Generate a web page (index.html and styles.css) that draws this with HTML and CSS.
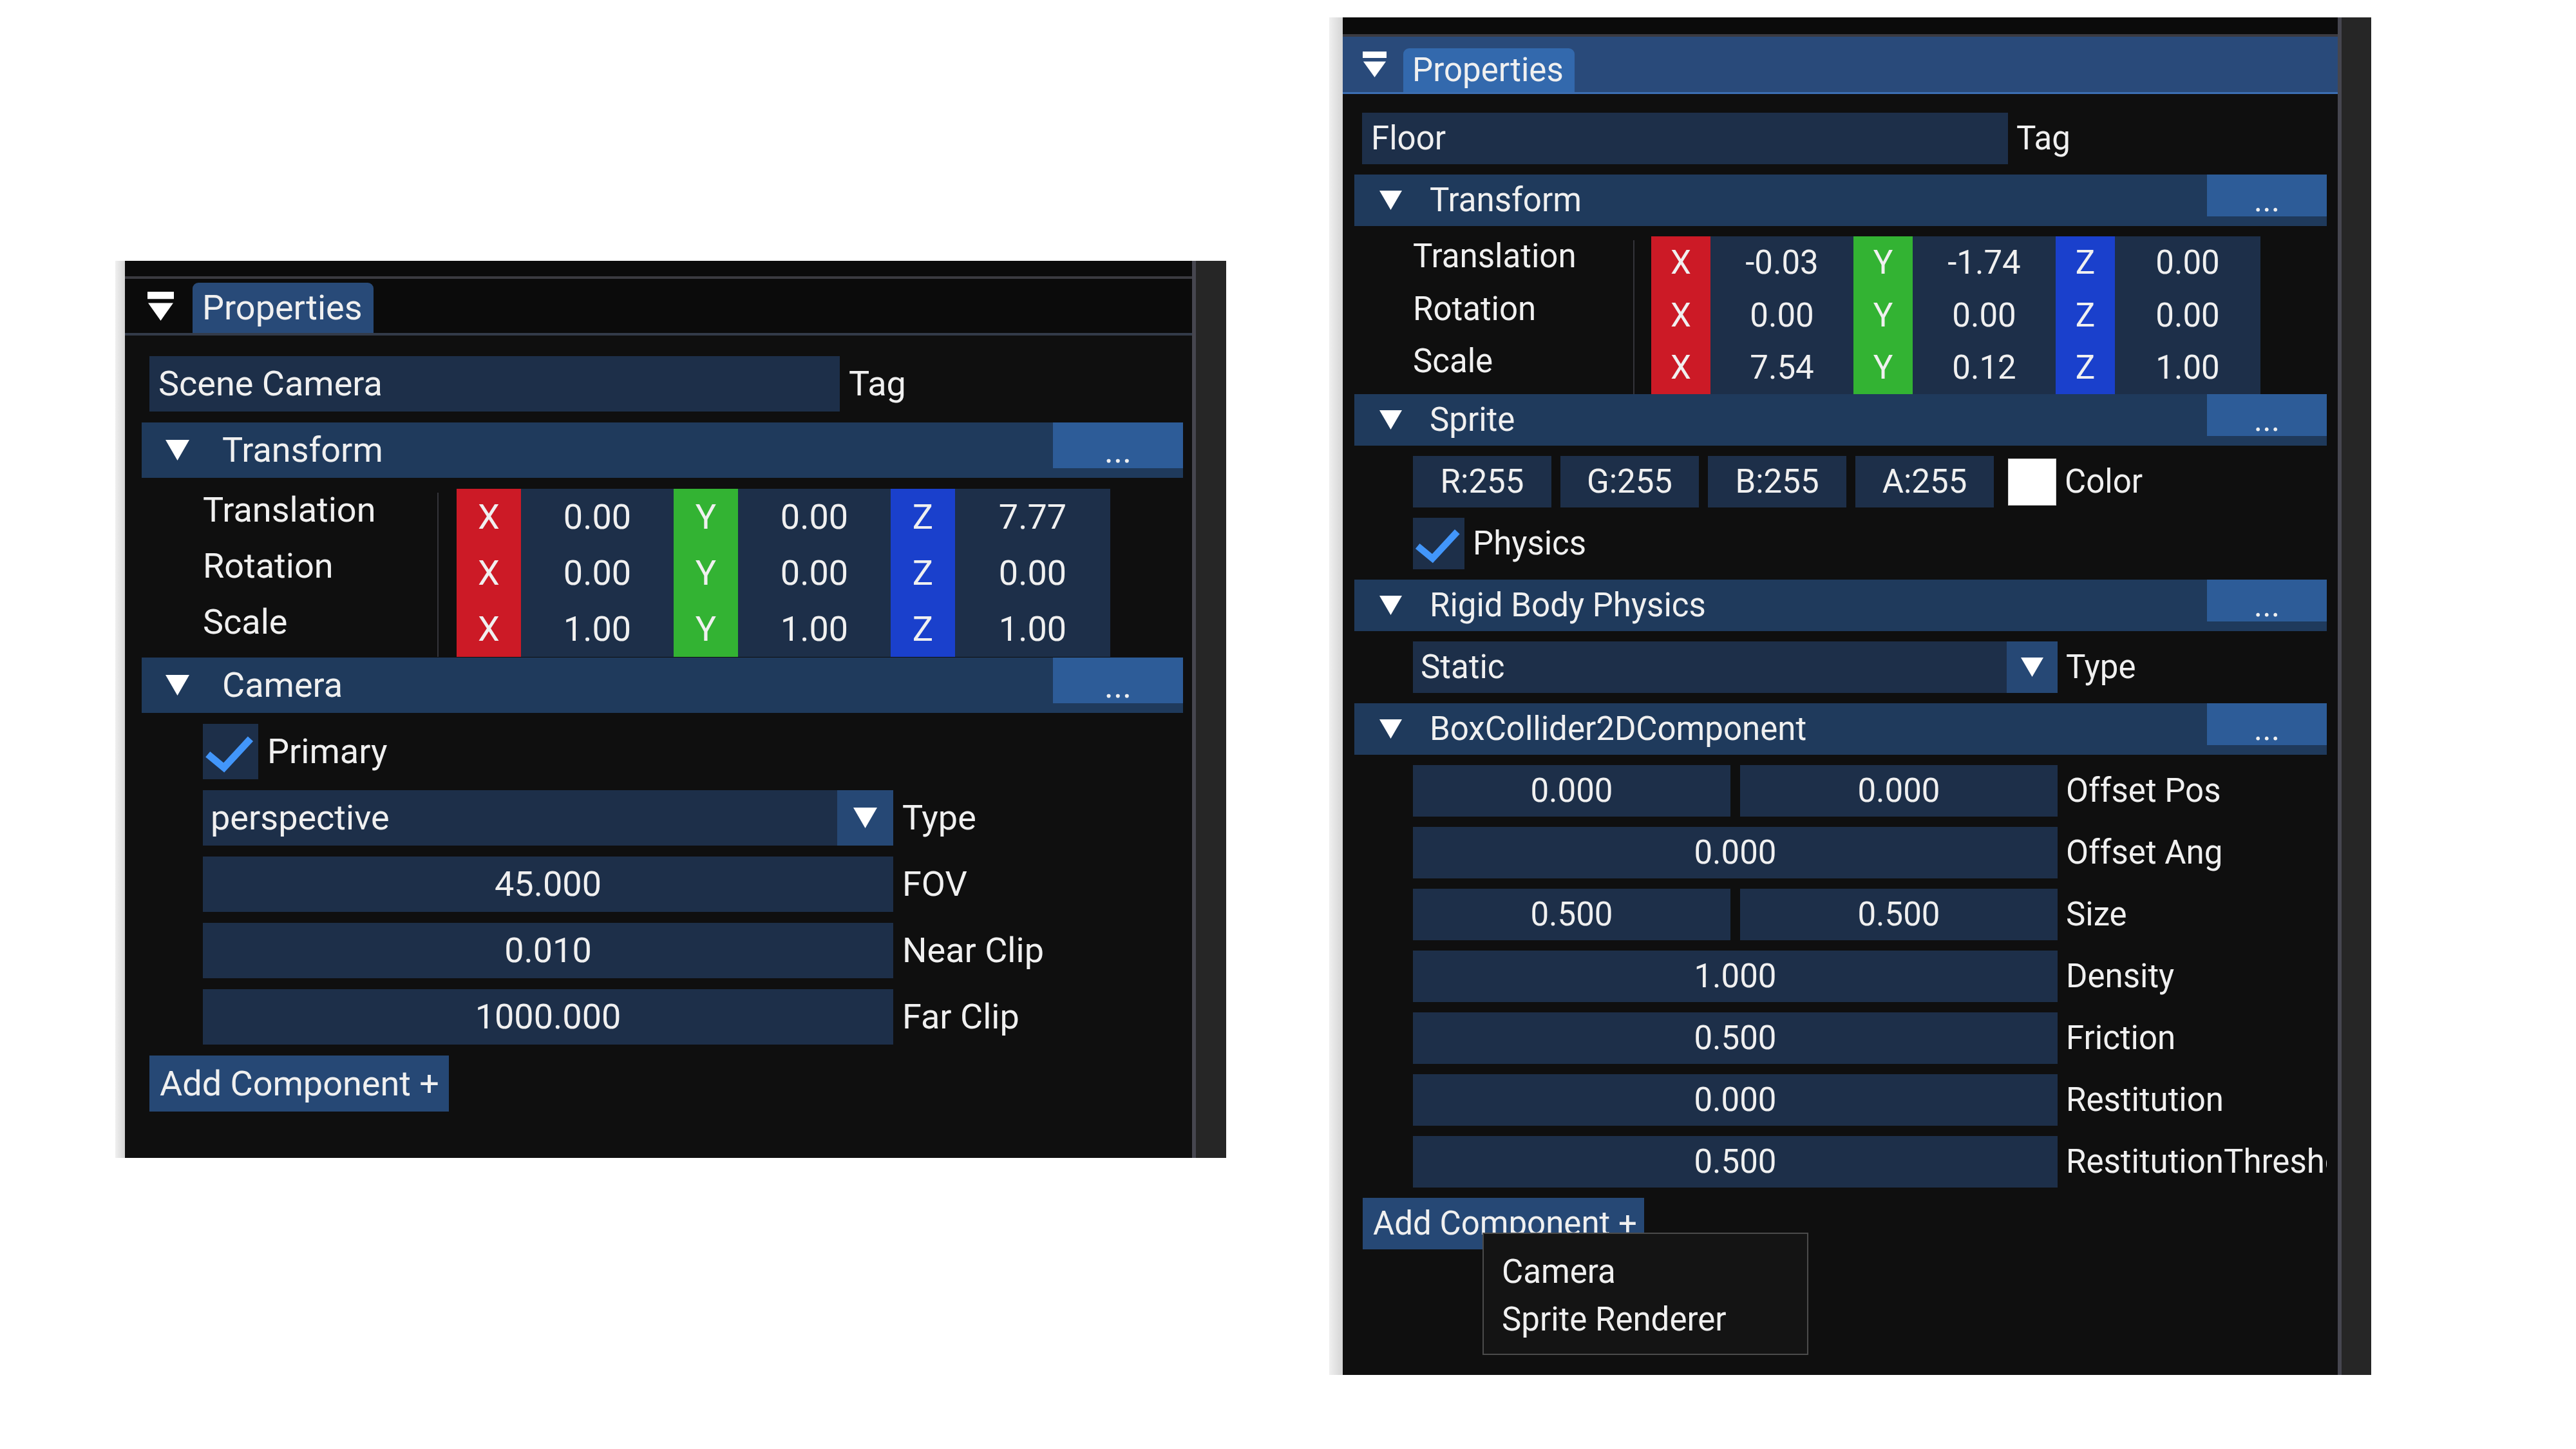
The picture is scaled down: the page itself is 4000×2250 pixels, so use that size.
FILE: index.html
```html
<!DOCTYPE html>
<html lang="en">
<head>
<meta charset="utf-8">
<title>Properties</title>
<link rel="stylesheet" href="styles.css">
</head>
<body>
<main class="canvas">

  <section class="panel panel-left">
    <div class="strip"></div>
    <div class="win">
      <div class="topband"></div>
      <div class="tabbar">
        <svg class="menu-icon" viewBox="0 0 40 44" preserveAspectRatio="none"><rect x="0" y="0" width="40" height="11" fill="#fff"/><polygon points="1,17 39,17 20,44" fill="#fff"/></svg>
        <div class="tab">Properties</div>
      </div>
      <div class="content">
        <div class="prop-row">
          <div class="frame name-input">Scene Camera</div>
          <span class="prop-label">Tag</span>
        </div>

        <div class="header">
          <span class="tri"></span><span class="header-title">Transform</span><span class="header-btn">...</span>
        </div>
        <div class="xform">
          <span class="xsep"></span>
          <span class="xlabel">Translation</span>
          <span class="axis ax-x">X</span><span class="xval xv1">0.00</span>
          <span class="axis ax-y">Y</span><span class="xval xv2">0.00</span>
          <span class="axis ax-z">Z</span><span class="xval xv3">7.77</span>
          <span class="xlabel">Rotation</span>
          <span class="axis ax-x">X</span><span class="xval xv1">0.00</span>
          <span class="axis ax-y">Y</span><span class="xval xv2">0.00</span>
          <span class="axis ax-z">Z</span><span class="xval xv3">0.00</span>
          <span class="xlabel">Scale</span>
          <span class="axis ax-x">X</span><span class="xval xv1">1.00</span>
          <span class="axis ax-y">Y</span><span class="xval xv2">1.00</span>
          <span class="axis ax-z">Z</span><span class="xval xv3">1.00</span>
        </div>

        <div class="header header-tight">
          <span class="tri"></span><span class="header-title">Camera</span><span class="header-btn">...</span>
        </div>
        <div class="prop-row indent">
          <span class="frame check"><svg viewBox="0 0 100 100"><polyline points="9,55 38,79 86,27" fill="none" stroke="#4296fa" stroke-width="13"/></svg></span>
          <span class="prop-label">Primary</span>
        </div>
        <div class="prop-row indent">
          <div class="frame field combo"><span class="combo-text">perspective</span><span class="combo-arrow"><span class="tri"></span></span></div>
          <span class="prop-label">Type</span>
        </div>
        <div class="prop-row indent">
          <div class="frame field center">45.000</div>
          <span class="prop-label">FOV</span>
        </div>
        <div class="prop-row indent">
          <div class="frame field center">0.010</div>
          <span class="prop-label">Near Clip</span>
        </div>
        <div class="prop-row indent">
          <div class="frame field center">1000.000</div>
          <span class="prop-label">Far Clip</span>
        </div>
        <div class="add-btn">Add Component +</div>
      </div>
    </div>
    <div class="rborder"></div>
    <div class="gutter"></div>
  </section>

  <section class="panel panel-right">
    <div class="strip"></div>
    <div class="win">
      <div class="topband"></div>
      <div class="tabbar">
        <svg class="menu-icon" viewBox="0 0 40 44" preserveAspectRatio="none"><rect x="0" y="0" width="40" height="11" fill="#fff"/><polygon points="1,17 39,17 20,44" fill="#fff"/></svg>
        <div class="tab">Properties</div>
      </div>
      <div class="content">
        <div class="prop-row">
          <div class="frame name-input">Floor</div>
          <span class="prop-label">Tag</span>
        </div>

        <div class="header">
          <span class="tri"></span><span class="header-title">Transform</span><span class="header-btn">...</span>
        </div>
        <div class="xform">
          <span class="xsep"></span>
          <span class="xlabel">Translation</span>
          <span class="axis ax-x">X</span><span class="xval xv1">-0.03</span>
          <span class="axis ax-y">Y</span><span class="xval xv2">-1.74</span>
          <span class="axis ax-z">Z</span><span class="xval xv3">0.00</span>
          <span class="xlabel">Rotation</span>
          <span class="axis ax-x">X</span><span class="xval xv1">0.00</span>
          <span class="axis ax-y">Y</span><span class="xval xv2">0.00</span>
          <span class="axis ax-z">Z</span><span class="xval xv3">0.00</span>
          <span class="xlabel">Scale</span>
          <span class="axis ax-x">X</span><span class="xval xv1">7.54</span>
          <span class="axis ax-y">Y</span><span class="xval xv2">0.12</span>
          <span class="axis ax-z">Z</span><span class="xval xv3">1.00</span>
        </div>

        <div class="header header-tight">
          <span class="tri"></span><span class="header-title">Sprite</span><span class="header-btn">...</span>
        </div>
        <div class="prop-row indent">
          <div class="rgba">
            <span class="frame center">R:255</span>
            <span class="frame center">G:255</span>
            <span class="frame center">B:255</span>
            <span class="frame center">A:255</span>
          </div>
          <span class="swatch"></span>
          <span class="prop-label">Color</span>
        </div>
        <div class="prop-row indent">
          <span class="frame check"><svg viewBox="0 0 100 100"><polyline points="9,55 38,79 86,27" fill="none" stroke="#4296fa" stroke-width="13"/></svg></span>
          <span class="prop-label">Physics</span>
        </div>

        <div class="header">
          <span class="tri"></span><span class="header-title">Rigid Body Physics</span><span class="header-btn">...</span>
        </div>
        <div class="prop-row indent">
          <div class="frame field combo"><span class="combo-text">Static</span><span class="combo-arrow"><span class="tri"></span></span></div>
          <span class="prop-label">Type</span>
        </div>

        <div class="header">
          <span class="tri"></span><span class="header-title">BoxCollider2DComponent</span><span class="header-btn">...</span>
        </div>
        <div class="prop-row indent">
          <div class="pair"><span class="frame center">0.000</span><span class="frame center">0.000</span></div>
          <span class="prop-label">Offset Pos</span>
        </div>
        <div class="prop-row indent">
          <div class="frame field center">0.000</div>
          <span class="prop-label">Offset Ang</span>
        </div>
        <div class="prop-row indent">
          <div class="pair"><span class="frame center">0.500</span><span class="frame center">0.500</span></div>
          <span class="prop-label">Size</span>
        </div>
        <div class="prop-row indent">
          <div class="frame field center">1.000</div>
          <span class="prop-label">Density</span>
        </div>
        <div class="prop-row indent">
          <div class="frame field center">0.500</div>
          <span class="prop-label">Friction</span>
        </div>
        <div class="prop-row indent">
          <div class="frame field center">0.000</div>
          <span class="prop-label">Restitution</span>
        </div>
        <div class="prop-row indent">
          <div class="frame field center">0.500</div>
          <span class="prop-label">RestitutionThreshold</span>
        </div>
        <div class="add-btn">Add Component +</div>
      </div>
      <div class="popup">
        <div class="popup-item">Camera</div>
        <div class="popup-item">Sprite Renderer</div>
      </div>
    </div>
    <div class="rborder"></div>
    <div class="gutter"></div>
  </section>

</main>
</body>
</html>
```

FILE: styles.css
```css
* { box-sizing: border-box; margin: 0; padding: 0; }

html, body {
  width: 4000px;
  height: 2250px;
  background: #ffffff;
  overflow: hidden;
}

body {
  font-family: Roboto, "Liberation Sans", sans-serif;
  color: #f0f0f0;
}

.canvas {
  position: relative;
  width: 4000px;
  height: 2250px;
}

/* ---------- panel shells (placed like windows on a desktop) ---------- */
.panel {
  position: absolute;
  display: flex;
  font-size: var(--fs);
  line-height: 1.172;
}

.panel-left {
  left: 179px; top: 405px; width: 1725px; height: 1393px;
  --fs: 54px; --strip: 15px; --gut: 47px;
  --band: 24px; --bar: 84px; --barline: 4px; --barline-c: #333b49; --bar-bg: #0b0b0b;
  --icon-l: 35px; --icon-w: 41px; --icon-h: 45px;
  --tab-l: 29px; --tab-w: 281px; --tab-h: 78px; --tab-bg: #284a78; --tab-pad: 15px;
  --pad-t: 32px; --pad-l: 26px; --pad-r: 14px; --gap: 17px;
  --fh: 86px; --name-ml: 12px; --name-w: 1072px; --lblgap: 14px;
  --hdr-h: 86px; --tri-l: 37px; --tri-w: 37px; --tri-h: 32px; --htext: 51px;
  --hbtn-w: 202px; --hbtn-h: 71px;
  --indent: 95px; --labw: 364px; --sepgap: 28px; --box: 100px; --val: 237px; --val3: 241px;
  --rowh: 87px; --labshift: 22px; --tight: -16px;
  --fw: 1072px; --arrow-w: 87px;
  --add-ml: 12px; --add-w: 465px; --add-h: 87px;
}

.panel-right {
  left: 2064px; top: 27px; width: 1618px; height: 2108px;
  --fs: 51px; --strip: 21px; --gut: 46px;
  --band: 26px; --bar: 86px; --barline: 3px; --barline-c: #3c6eb2; --bar-bg: #294a7a;
  --icon-l: 31px; --icon-w: 37px; --icon-h: 40px;
  --tab-l: 26px; --tab-w: 266px; --tab-h: 68px; --tab-bg: #3369ad; --tab-pad: 14px;
  --pad-t: 29px; --pad-l: 18px; --pad-r: 17px; --gap: 16px;
  --fh: 80px; --name-ml: 12px; --name-w: 1003px; --lblgap: 13px;
  --hdr-h: 80px; --tri-l: 39px; --tri-w: 35px; --tri-h: 30px; --htext: 43px;
  --hbtn-w: 186px; --hbtn-h: 65px;
  --indent: 91px; --labw: 342px; --sepgap: 26px; --box: 92px; --val: 222px; --val3: 226px;
  --rowh: 81.7px; --labshift: 20px; --tight: -16px;
  --fw: 1001px; --arrow-w: 79px;
  --add-ml: 13px; --add-w: 437px; --add-h: 80px;
}

.strip {
  width: var(--strip);
  background: linear-gradient(90deg, #f0f0f0, #d4d4d4);
}

.win {
  flex: 1;
  position: relative;
  display: flex;
  flex-direction: column;
  background: #0f0f0f;
  overflow: hidden;
}

.rborder { width: 6px; background: #46464f; }
.gutter { width: var(--gut); background: #262626; }

/* ---------- top band & tab bar ---------- */
.topband {
  height: calc(var(--band) + 4px);
  background: #0b0b0b;
  border-bottom: 4px solid #3b3b41;
}

.tabbar {
  height: calc(var(--bar) + var(--barline));
  display: flex;
  align-items: flex-end;
  background: var(--bar-bg);
  border-bottom: var(--barline) solid var(--barline-c);
}

.menu-icon {
  width: var(--icon-w);
  height: var(--icon-h);
  margin-left: var(--icon-l);
  align-self: center;
  flex: none;
}

.tab {
  width: var(--tab-w);
  height: var(--tab-h);
  margin-left: var(--tab-l);
  padding-left: var(--tab-pad);
  background: var(--tab-bg);
  border-radius: 9px 9px 0 0;
  display: flex;
  align-items: center;
}

/* ---------- content ---------- */
.content {
  display: flex;
  flex-direction: column;
  gap: var(--gap);
  padding: var(--pad-t) var(--pad-r) 0 var(--pad-l);
}

.frame {
  height: var(--fh);
  background: #1d2f49;
  display: flex;
  align-items: center;
  white-space: nowrap;
}

.center { justify-content: center; }

.prop-row {
  display: flex;
  align-items: center;
  min-width: 0;
}

.indent { margin-left: var(--indent); }

.name-input {
  width: var(--name-w);
  margin-left: var(--name-ml);
  padding-left: 14px;
}

.prop-label {
  margin-left: var(--lblgap);
  white-space: nowrap;
  overflow: hidden;
  flex: 1;
  min-width: 0;
}

/* ---------- collapsing headers ---------- */
.header {
  height: var(--hdr-h);
  background: #1f3a5c;
  display: flex;
  align-items: center;
  padding-left: var(--tri-l);
}

.header-tight { margin-top: var(--tight); }

.tri {
  width: var(--tri-w);
  height: var(--tri-h);
  background: #ffffff;
  clip-path: polygon(0 0, 100% 0, 50% 100%);
  flex: none;
}

.header-title { margin-left: var(--htext); white-space: nowrap; }

.header-btn {
  margin-left: auto;
  align-self: flex-start;
  width: var(--hbtn-w);
  height: var(--hbtn-h);
  background: #2d5c98;
  display: flex;
  justify-content: center;
  align-items: flex-end;
  line-height: 1;
}

/* ---------- transform table ---------- */
.xform {
  margin-left: var(--indent);
  display: grid;
  grid-template-columns: var(--labw) 2px var(--sepgap) var(--box) var(--val) var(--box) var(--val) var(--box) var(--val3);
  grid-auto-rows: var(--rowh);
}

.xsep {
  grid-column: 2;
  grid-row: 1 / 4;
  background: #34343a;
  margin: 6px 0 0;
}

.xlabel {
  grid-column: 1;
  align-self: center;
  padding-bottom: var(--labshift);
}

.axis, .xval {
  display: flex;
  align-items: center;
  justify-content: center;
}

.ax-x { grid-column: 4; background: #cc1a26; }
.ax-y { grid-column: 6; background: #33b333; }
.ax-z { grid-column: 8; background: #1a40cc; }
.xval { background: #1d2f49; }
.xv1 { grid-column: 5; }
.xv2 { grid-column: 7; }
.xv3 { grid-column: 9; }

/* ---------- widgets ---------- */
.check {
  width: var(--fh);
  flex: none;
  justify-content: center;
}
.check svg { width: 100%; height: 100%; }

.field { width: var(--fw); flex: none; }

.combo { justify-content: space-between; }
.combo-text { padding-left: 12px; }
.combo-arrow {
  width: var(--arrow-w);
  height: 100%;
  background: #264875;
  display: flex;
  align-items: center;
  justify-content: center;
}

.rgba {
  display: flex;
  gap: 14px;
  flex: none;
}
.rgba .frame { width: 215px; }

.swatch {
  width: 75px;
  height: 73px;
  margin-left: 22px;
  background: #ffffff;
  border: 1px solid #d0d0d0;
  flex: none;
}

.pair {
  width: var(--fw);
  display: flex;
  gap: 15px;
  flex: none;
}
.pair .frame { flex: 1; }

.add-btn {
  align-self: flex-start;
  margin-left: var(--add-ml);
  width: var(--add-w);
  height: var(--add-h);
  background: #264875;
  padding-left: 16px;
  display: flex;
  align-items: center;
  white-space: nowrap;
}

/* ---------- popup menu (floats over content) ---------- */
.popup {
  position: absolute;
  left: 217px;
  top: 1887px;
  width: 506px;
  height: 190px;
  background: #141414;
  border: 2px solid #4b4b4b;
  padding: 29px 0 0 28px;
  display: flex;
  flex-direction: column;
  gap: 14px;
}
.popup-item { white-space: nowrap; }
```
